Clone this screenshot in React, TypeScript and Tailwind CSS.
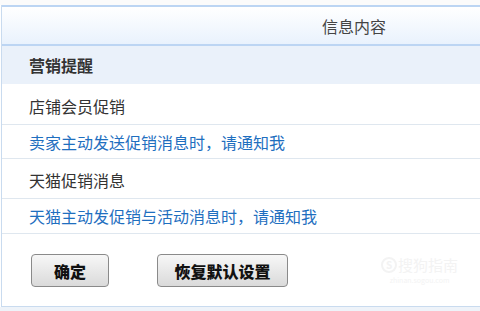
export default function App() {
  const font = { fontFamily: '"Noto Sans CJK SC", "Noto Sans", sans-serif' };
  return (
    <div className="w-[480px] h-[311px] bg-white overflow-hidden" style={font}>
      <div className="h-[5px] bg-[#fbfbfb]" />
      <div className="ml-[1px] border-l border-[#c9dbef] flex flex-col">
        <div className="h-[41px] border-t-2 border-b-2 border-[#bcd5f3] bg-gradient-to-b from-white to-[#e9f2fd] flex items-center pl-[320px] text-[16px] text-[#444]">
          信息内容
        </div>
        <div className="h-[38px] bg-[#eaf1fa] flex items-center pl-[27px] text-[16px] font-bold text-[#333]">
          营销提醒
        </div>
        <div className="h-[41px] border-b border-[#dfe7ef] flex items-center pl-[27px] pt-[4px] text-[16px] text-[#333]">
          店铺会员促销
        </div>
        <div className="h-[34px] border-b border-[#dfe7ef] flex items-center pl-[27px] text-[16px] text-[#1f6fbf]">
          卖家主动发送促销消息时，请通知我
        </div>
        <div className="h-[40px] border-b border-[#dfe7ef] flex items-center pl-[27px] pt-[2px] text-[16px] text-[#333]">
          天猫促销消息
        </div>
        <div className="h-[35px] border-b border-[#dfe7ef] flex items-center pl-[27px] text-[16px] text-[#1f6fbf]">
          天猫主动发促销与活动消息时，请通知我
        </div>
        <div className="relative h-[73px] border-b border-[#c9dbef] flex items-start pt-[20px] pl-[29px] gap-[48px]">
          <button className="w-[78px] h-[33px] rounded-[4px] border border-[#8a8a8a] bg-gradient-to-b from-[#f7f7f7] to-[#dadada] text-[16px] font-black text-[#111] flex items-center justify-center">
            确定
          </button>
          <button className="w-[131px] h-[33px] rounded-[4px] border border-[#8a8a8a] bg-gradient-to-b from-[#f7f7f7] to-[#dadada] text-[16px] font-black text-[#111] flex items-center justify-center">
            恢复默认设置
          </button>
          <div className="absolute left-[379px] top-[22px] flex flex-col items-center text-[#f3f3f3]">
            <div className="flex items-center gap-[1px] text-[15px] leading-[17px]">
              <span className="w-[16px] h-[16px] rounded-full border-2 border-[#f3f3f3] text-[10px] flex items-center justify-center font-bold">S</span>
              搜狗指南
            </div>
            <div className="text-[7px] leading-[10px] mt-[2px]">zhinan.sogou.com</div>
          </div>
        </div>
      </div>
      <div className="h-[4px] bg-[#eef3f9]" />
    </div>
  );
}
